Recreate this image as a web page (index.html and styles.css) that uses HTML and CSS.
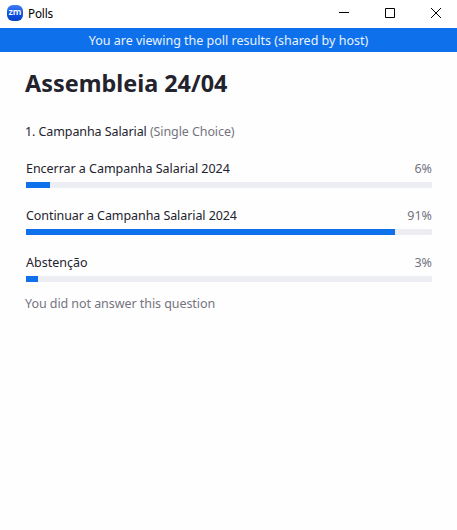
FILE: index.html
```html
<!DOCTYPE html>
<html lang="pt">
<head>
<meta charset="utf-8">
<title>Polls</title>
<link rel="stylesheet" href="styles.css">
</head>
<body>
<header class="titlebar">
  <div class="logo"><span class="logo-text">zm</span></div>
  <span class="window-title">Polls</span>
  <div class="controls">
    <svg class="control" viewBox="0 0 12 12"><path d="M1 5.5h10"/></svg>
    <svg class="control" viewBox="0 0 12 12"><path d="M1.5 1.5h9v9h-9z"/></svg>
    <svg class="control" viewBox="0 0 12 12"><path d="M1 1l10 10M11 1L1 11"/></svg>
  </div>
</header>
<div class="banner"><span class="banner-text">You are viewing the poll results (shared by host)</span></div>
<main class="poll">
  <h1 class="title">Assembleia 24/04</h1>
  <p class="question"><span class="question-text">1. Campanha Salarial</span> <span class="kind">(Single Choice)</span></p>
  <section class="option">
    <div class="row"><span class="label first">Encerrar a Campanha Salarial 2024</span><span class="percent">6%</span></div>
    <div class="track"><div class="fill" style="width:24px"></div></div>
  </section>
  <section class="option">
    <div class="row"><span class="label second">Continuar a Campanha Salarial 2024</span><span class="percent">91%</span></div>
    <div class="track"><div class="fill" style="width:369px"></div></div>
  </section>
  <section class="option">
    <div class="row"><span class="label">Abstenção</span><span class="percent">3%</span></div>
    <div class="track"><div class="fill" style="width:12px"></div></div>
  </section>
  <p class="note">You did not answer this question</p>
</main>
</body>
</html>
```
FILE: styles.css
```css
* { box-sizing: border-box; }
body {
  margin: 0;
  height: 530px;
  background: #fefefe;
  color: #23232e;
  font-family: "Noto Sans", "Open Sans", sans-serif;
  font-size: 12.5px;
  overflow: hidden;
  white-space: nowrap;
}
.titlebar {
  display: flex;
  align-items: center;
  height: 28px;
  padding: 0 15px 3px 7px;
  background: #fff;
}
.logo {
  display: flex;
  align-items: center;
  justify-content: center;
  width: 16px;
  height: 16px;
  border-radius: 6px;
  background: linear-gradient(#3f7df5, #0b4fe0 60%, #0641c4);
}
.logo-text {
  color: #fff;
  font: 600 9px/10px "Noto Sans", sans-serif;
  letter-spacing: -0.1px;
  padding-bottom: 1px;
}
.window-title {
  margin-left: 5px;
  color: #000;
  font-size: 11.7px;
  letter-spacing: -0.15px;
  line-height: 16px;
}
.controls {
  display: flex;
  gap: 34px;
  margin-left: auto;
}
.control {
  width: 12px;
  height: 12px;
  fill: none;
  stroke: #000;
  stroke-width: 1;
}
.banner {
  height: 24px;
  background: #0e71eb;
  color: #e9f2ff;
  line-height: 25px;
  text-align: center;
}
.poll { padding: 14px 25px 0 26px; }
.title {
  height: 36px;
  margin: 0 0 0 -1px;
  font-size: 23.4px;
  font-weight: 700;
  line-height: 35px;
}
.question {
  height: 20px;
  margin: 19px 0 17px -1px;
  letter-spacing: -0.09px;
  line-height: 22px;
}
.kind, .percent, .note { color: #747480; }
.option { height: 47px; }
.row {
  display: flex;
  justify-content: space-between;
  height: 24px;
  line-height: 22px;
}
.first { letter-spacing: -0.04px; }
.second { letter-spacing: -0.08px; }
.track {
  height: 6px;
  background: #ededf4;
  border-radius: 1px;
}
.fill {
  height: 6px;
  background: #0e71eb;
}
.note {
  margin: -6px 0 0 -1px;
  letter-spacing: -0.06px;
  line-height: 22px;
}
```
